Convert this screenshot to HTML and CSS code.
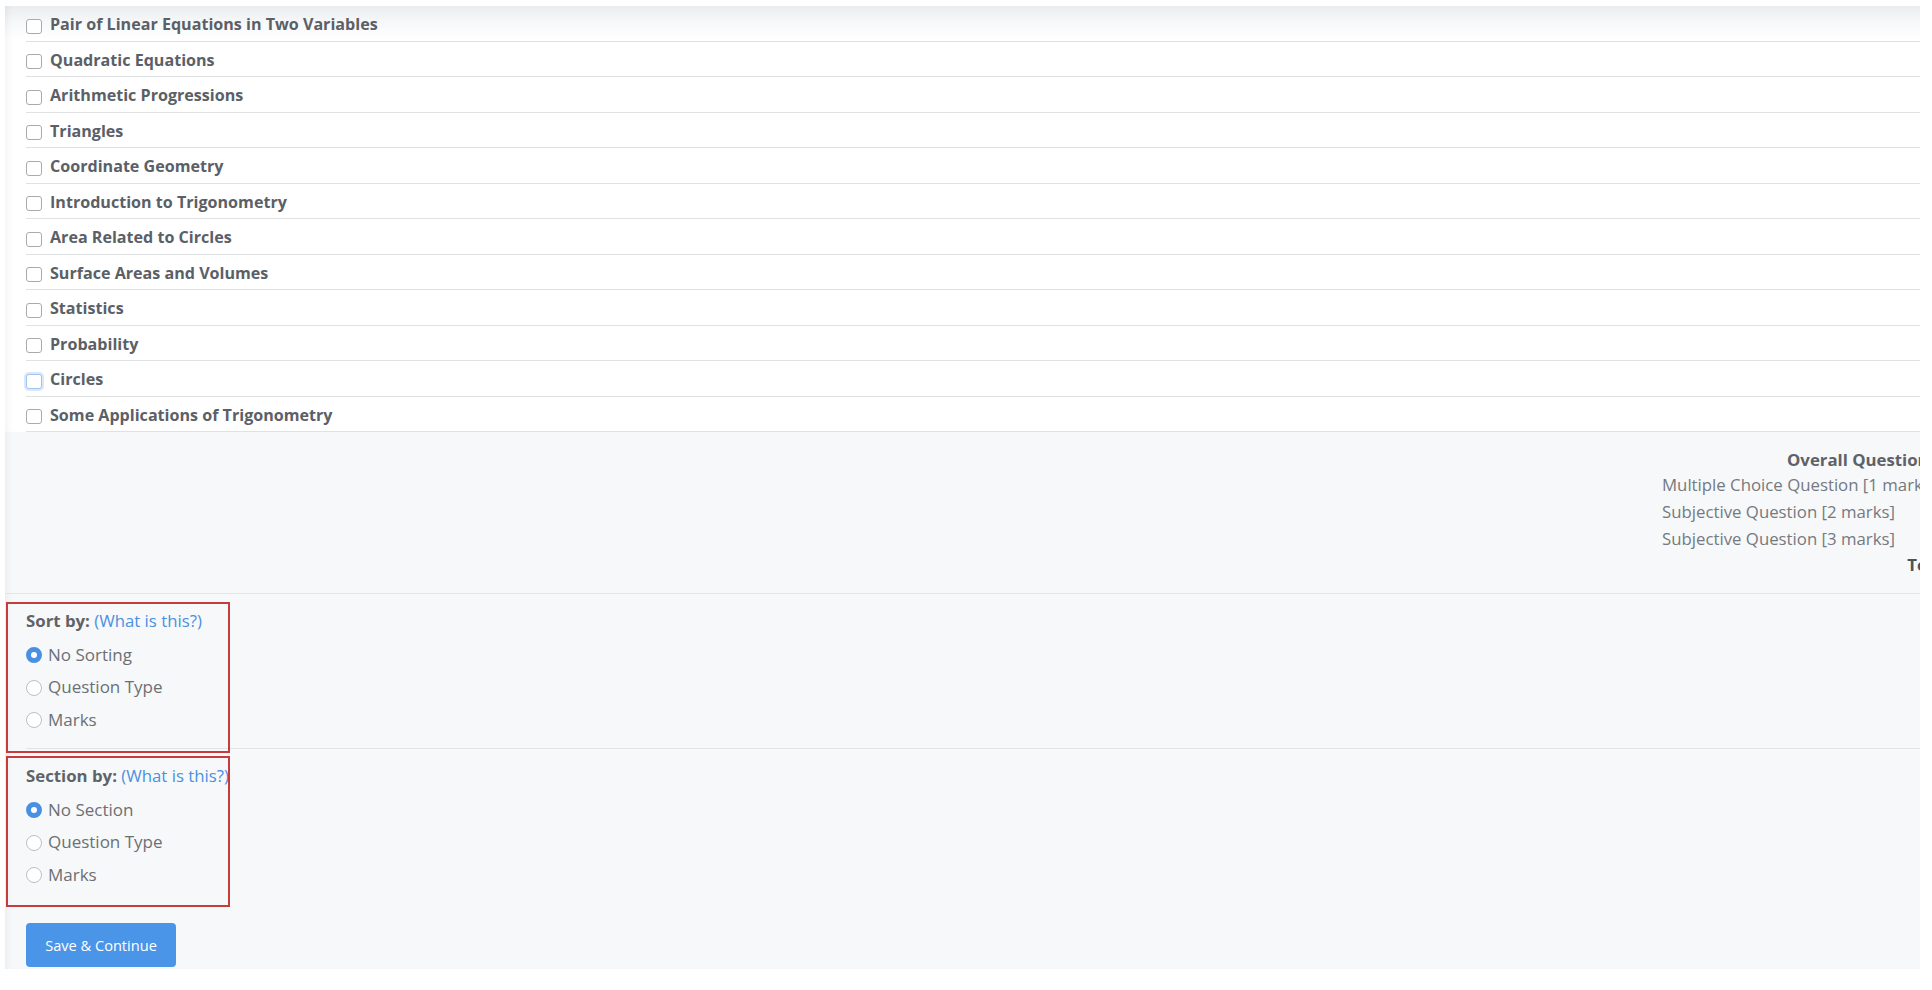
FILE: index.html
```html
<!DOCTYPE html>
<html>
<head>
<meta charset="utf-8">
<link rel="stylesheet" href="styles.css">
</head>
<body>
<div class="page">
  <div class="topics">
    <label class="topic"><input type="checkbox" class="cb"><span>Pair of Linear Equations in Two Variables</span></label>
    <label class="topic"><input type="checkbox" class="cb"><span>Quadratic Equations</span></label>
    <label class="topic"><input type="checkbox" class="cb"><span>Arithmetic Progressions</span></label>
    <label class="topic"><input type="checkbox" class="cb"><span>Triangles</span></label>
    <label class="topic"><input type="checkbox" class="cb"><span>Coordinate Geometry</span></label>
    <label class="topic"><input type="checkbox" class="cb"><span>Introduction to Trigonometry</span></label>
    <label class="topic"><input type="checkbox" class="cb"><span>Area Related to Circles</span></label>
    <label class="topic"><input type="checkbox" class="cb"><span>Surface Areas and Volumes</span></label>
    <label class="topic"><input type="checkbox" class="cb"><span>Statistics</span></label>
    <label class="topic"><input type="checkbox" class="cb"><span>Probability</span></label>
    <label class="topic"><input type="checkbox" class="cb cb-focus"><span>Circles</span></label>
    <label class="topic"><input type="checkbox" class="cb"><span>Some Applications of Trigonometry</span></label>
  </div>

  <div class="summary">
    <table class="summary-table">
      <tr><th colspan="2" class="sum-head">Overall Questions</th></tr>
      <tr><td class="sum-label">Multiple Choice Question [1 marks]</td><td class="sum-val">0</td></tr>
      <tr><td class="sum-label">Subjective Question [2 marks]</td><td class="sum-val">0</td></tr>
      <tr><td class="sum-label">Subjective Question [3 marks]</td><td class="sum-val">0</td></tr>
      <tr class="total-row"><td class="sum-total">Total</td><td class="sum-val">0</td></tr>
    </table>
  </div>

  <div class="option-block">
    <div class="option-inner bordered">
      <div class="opt-title"><b>Sort by:</b> (<a class="link" href="#">What is this?</a>)</div>
      <label class="radio-row"><input type="radio" name="sort" class="rd" checked><span>No Sorting</span></label>
      <label class="radio-row"><input type="radio" name="sort" class="rd"><span>Question Type</span></label>
      <label class="radio-row"><input type="radio" name="sort" class="rd"><span>Marks</span></label>
    </div>
  </div>

  <div class="option-block">
    <div class="option-inner">
      <div class="opt-title"><b>Section by:</b> (<a class="link" href="#">What is this?</a>)</div>
      <label class="radio-row"><input type="radio" name="sect" class="rd" checked><span>No Section</span></label>
      <label class="radio-row"><input type="radio" name="sect" class="rd"><span>Question Type</span></label>
      <label class="radio-row"><input type="radio" name="sect" class="rd"><span>Marks</span></label>
    </div>
  </div>

  <div class="actions">
    <button class="btn">Save &amp; Continue</button>
  </div>

  <div class="annot annot-sort"></div>
  <div class="annot annot-section"></div>
</div>
</body>
</html>
```

FILE: styles.css
```css
* { box-sizing: border-box; }
html, body { margin: 0; padding: 0; background: #fff; }
body {
  font-family: "Open Sans", "Liberation Sans", Arial, sans-serif;
  font-size: 16px;
}
.page {
  position: relative;
  margin: 6px 0 0 5px;
  width: 1915px;
  height: 963px;
  overflow: hidden;
  background: #f7f8f9;
  box-shadow: inset 7px 0 8px -6px rgba(0,0,0,0.07);
}
.topics {
  background: linear-gradient(to bottom, #eaecee 0, #f8f9fa 18px, #fff 34px);
  padding-left: 21px;
  box-shadow: inset 7px 0 8px -6px rgba(0,0,0,0.07);
}
.topic {
  display: flex;
  align-items: center;
  height: 35.5px;
  padding-top: 4px;
  border-bottom: 1px solid #dfe1e2;
  font-weight: 700;
  color: #5b6067;
  font-size: 16.1px;
  line-height: 20px;
}
.topic span { position: relative; top: -1px; }
.cb {
  -webkit-appearance: none;
  appearance: none;
  margin: 2px 8px 0 0;
  width: 16px;
  height: 15px;
  border: 1px solid #a8abae;
  border-radius: 3px;
  background: #fff;
  flex: none;
}
.cb-focus {
  border-color: #9fc5ee;
  box-shadow: 0 0 0 2px rgba(120,170,230,0.28);
}
.summary {
  display: flex;
  justify-content: flex-end;
  height: 162px;
  padding-top: 17px;
  border-bottom: 1px solid #e3e5e6;
}
.summary-table {
  width: 400px;
  margin-right: -142px;
  border-collapse: collapse;
  align-self: flex-start;
  font-size: 16.8px;
}
.summary-table th, .summary-table td {
  padding: 2.5px 0;
  line-height: 22px;
  white-space: nowrap;
}
.summary-table .total-row td { padding-top: 1px; }
.sum-head {
  padding: 0 0 0.5px !important;
  text-align: center;
  font-weight: 700;
  color: #5d6267;
}
.sum-label {
  width: 288px;
  color: #747a80;
  text-align: left;
}
.sum-total {
  text-align: right;
  font-weight: 700;
  color: #4e5257;
}
.sum-val { color: #747a80; text-align: center; }
.option-block {
  padding-left: 21px;
}
.option-inner {
  height: 155px;
  padding-top: 16px;
  padding-bottom: 12px;
}
.option-inner.bordered {
  border-bottom: 1px solid #e1e3e4;
}
.opt-title {
  line-height: 22px;
  color: #4a90e2;
  margin-bottom: 6px;
  font-size: 16.8px;
  white-space: nowrap;
}
.opt-title b { color: #5e6368; font-weight: 700; }
.link { color: #4a90e2; text-decoration: none; }
.radio-row {
  display: flex;
  align-items: center;
  height: 32.5px;
  color: #6b7075;
  font-size: 17px;
}
.rd {
  -webkit-appearance: none;
  appearance: none;
  margin: 2px 6px 0 0;
  width: 16px;
  height: 16px;
  border: 1px solid #bcbfc2;
  border-radius: 50%;
  background: #fff;
  flex: none;
}
.rd:checked {
  border: 5px solid #4a90e2;
}
.actions {
  padding: 19px 0 0 21px;
}
.btn {
  width: 150px;
  height: 44px;
  border: none;
  border-radius: 4px;
  background: #4a95e8;
  color: #fff;
  font-family: "Open Sans", "Liberation Sans", Arial, sans-serif;
  font-size: 14.6px;
  padding: 0;
}
.annot {
  position: absolute;
  left: 1px;
  width: 224px;
  height: 151px;
  border: 2px solid #c43c3c;
  pointer-events: none;
}
.annot-sort { top: 596px; }
.annot-section { top: 750px; }
```
